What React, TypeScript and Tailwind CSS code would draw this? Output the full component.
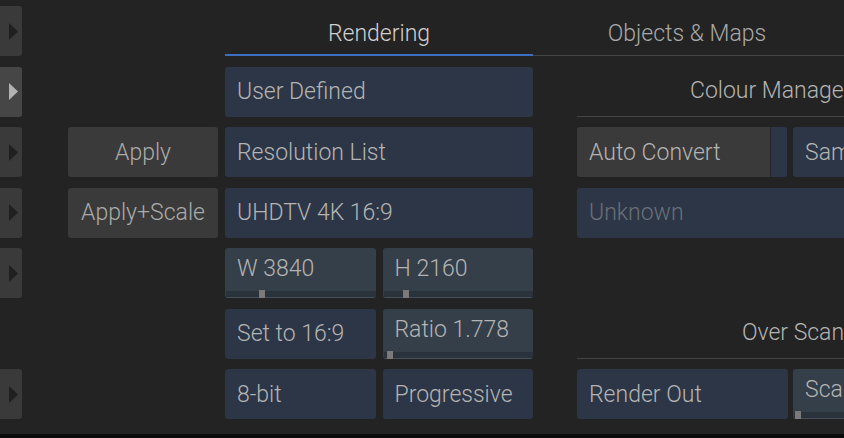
import React from 'react';

const field = 'h-[50px] rounded-[3px] bg-[#2c3646] flex items-center pl-3 pt-[2px] overflow-hidden whitespace-nowrap';
const sliderField = 'h-[50px] rounded-[3px] bg-[#353f4a] text-[#b4b4b4] relative overflow-hidden whitespace-nowrap';

function Tab({ active }: { active?: boolean }) {
  return (
    <div
      className={`h-[50px] w-[22px] rounded-r-[3px] flex items-center justify-start pl-[9px] ${
        active ? 'bg-[#464646]' : 'bg-[#3a3a3a]'
      }`}
    >
      <svg width="9" height="17" viewBox="0 0 9 17">
        <polygon points="0,0 9,8.5 0,17" fill={active ? '#b3b3b3' : '#202020'} />
      </svg>
    </div>
  );
}

function Slider({ label, thumb }: { label: string; thumb: number }) {
  return (
    <div className={sliderField}>
      <div className="pl-3 pt-[8px] leading-[26px]">{label}</div>
      <div className="absolute left-[1px] right-0 bottom-0 h-[7px] bg-[#2a323c] border-b border-[#46505b]" />
      <div className="absolute bottom-0 h-[8px] w-[6px] bg-[#7a7a7a]" style={{ left: thumb }} />
    </div>
  );
}

export default function App() {
  return (
    <div
      className="w-[844px] h-[438px] overflow-hidden bg-[#232323] flex flex-col text-[23px] font-light"
      style={{ fontFamily: 'Roboto, "Noto Sans", sans-serif' }}
    >
      <div className="grid grid-cols-[22px_203px_352px_432px] grid-rows-[50px_50px_50px_50px_50px_50px_50px] gap-y-[10.5px] pt-[6px]">
        {/* left tab strip */}
        <div className="col-start-1 row-start-1"><Tab /></div>
        <div className="col-start-1 row-start-2"><Tab active /></div>
        <div className="col-start-1 row-start-3"><Tab /></div>
        <div className="col-start-1 row-start-4"><Tab /></div>
        <div className="col-start-1 row-start-5"><Tab /></div>
        <div className="col-start-1 row-start-7"><Tab /></div>

        {/* apply buttons */}
        <div className="col-start-2 row-start-3 flex justify-end pr-[7px]">
          <div className="w-[150px] h-[50px] rounded-[3px] bg-[#3a3a3a] text-[#ababab] flex items-center justify-center pt-[2px]">Apply</div>
        </div>
        <div className="col-start-2 row-start-4 flex justify-end pr-[7px]">
          <div className="w-[150px] h-[50px] rounded-[3px] bg-[#3a3a3a] text-[#ababab] flex items-center justify-center pt-[2px]">Apply+Scale</div>
        </div>

        {/* tab bar */}
        <div className="col-start-3 col-span-2 row-start-1 flex">
          <div className="w-[308px] h-[50px] flex justify-center pt-[11px] text-[#d0d0d0] border-b-2 border-[#3c6fc0] whitespace-nowrap">Rendering</div>
          <div className="w-[308px] h-[50px] flex justify-center pt-[11px] text-[#a8a8a8] border-b border-[#444444] whitespace-nowrap">
            Objects &amp; Maps
          </div>
          <div className="flex-1 h-[50px] border-b border-[#444444]" />
        </div>

        {/* rendering column */}
        <div className="col-start-3 row-start-2 w-[308px]">
          <div className={`${field} text-[#b4b4b4]`}>User Defined</div>
        </div>
        <div className="col-start-3 row-start-3 w-[308px]">
          <div className={`${field} text-[#b4b4b4]`}>Resolution List</div>
        </div>
        <div className="col-start-3 row-start-4 w-[308px]">
          <div className={`${field} text-[#b4b4b4]`}>UHDTV 4K 16:9</div>
        </div>
        <div className="col-start-3 row-start-5 w-[308px] grid grid-cols-2 gap-x-[7px]">
          <Slider label="W 3840" thumb={34} />
          <Slider label="H 2160" thumb={20} />
        </div>
        <div className="col-start-3 row-start-6 w-[308px] grid grid-cols-2 gap-x-[7px]">
          <div className={`${field} text-[#b4b4b4]`}>Set to 16:9</div>
          <Slider label="Ratio 1.778" thumb={4} />
        </div>
        <div className="col-start-3 row-start-7 w-[308px] grid grid-cols-2 gap-x-[7px]">
          <div className={`${field} text-[#b4b4b4]`}>8-bit</div>
          <div className={`${field} text-[#b4b4b4]`}>Progressive</div>
        </div>

        {/* colour management column */}
        <div className="col-start-4 row-start-2 h-[50px] border-b border-[#444444] flex justify-center items-center pt-[1px] text-[#b4b4b4] whitespace-nowrap">
          Colour Management
        </div>
        <div className="col-start-4 row-start-3 flex gap-x-[6px]">
          <div className="w-[210px] h-[50px] rounded-[3px] flex overflow-hidden">
            <div className="w-[194px] bg-[#3a3a3a] text-[#b4b4b4] flex items-center pl-3 pt-[2px] whitespace-nowrap border-r border-[#262626]">Auto Convert</div>
            <div className="flex-1 bg-[#2c3646]" />
          </div>
          <div className={`${field} w-[210px] text-[#b4b4b4]`}>Same as Input</div>
        </div>
        <div className="col-start-4 row-start-4">
          <div className={`${field} text-[#6b7079]`}>Unknown</div>
        </div>
        <div className="col-start-4 row-start-6 h-[50px] border-b border-[#444444] flex justify-center items-center pt-[1px] text-[#b4b4b4] whitespace-nowrap">
          Over Scan
        </div>
        <div className="col-start-4 row-start-7 flex gap-x-[5px]">
          <div className={`${field} w-[211px] text-[#b4b4b4]`}>Render Out</div>
          <div className="w-[210px]">
            <Slider label="Scale 0%" thumb={2} />
          </div>
        </div>
      </div>
      <div className="mt-auto h-[4px] bg-[#0b0b0b]" />
    </div>
  );
}
